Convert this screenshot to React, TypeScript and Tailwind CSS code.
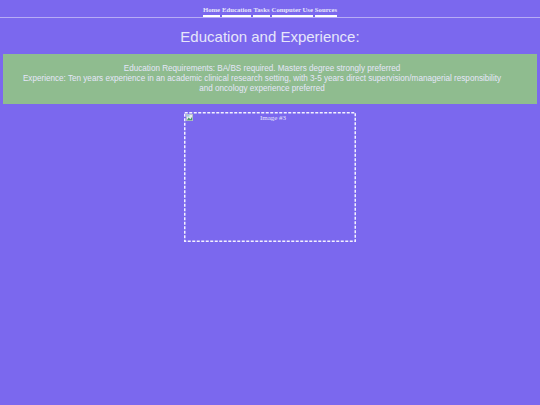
const links = ['Home', 'Education', 'Tasks', 'Computer Use', 'Sources'];

function BrokenImageIcon() {
  return (
    <svg width="7" height="7" viewBox="0 0 8 8" aria-hidden="true">
      <rect x="0.5" y="0.5" width="7" height="7" fill="#e8ecef" stroke="#b8c0c8" />
      <path d="M1 7 L3 4 L5 6 L7 3 L7 7 Z" fill="#4a9a6a" />
      <rect x="1" y="1" width="3" height="2" fill="#9cc8e8" />
    </svg>
  );
}

export default function App() {
  return (
    <div className="min-h-[405px] bg-[#7b68ee] text-[#e6e6fa] font-['Liberation_Sans',Arial,sans-serif]">
      <nav className="flex justify-center border-b border-[#b7acf5] pt-[5px] font-['Liberation_Serif','Times_New_Roman',serif] text-[6.7px] font-bold leading-[9px]">
        <div className="flex gap-[2px]">
          {links.map((link) => (
            <a key={link} href="#" className="border-b-2 border-white pb-[1px] text-[#e6e6fa]">
              {link}
            </a>
          ))}
        </div>
      </nav>

      <h1 className="mt-[9px] text-center text-[15px] leading-[20px]">Education and Experience:</h1>

      <section className="mx-[3px] mt-[7px] bg-[#8fbc8f] pl-[16px] pr-[32px] py-[10px] text-center text-[8.15px] leading-[10px]">
        <p>Education Requirements: BA/BS required. Masters degree strongly preferred</p>
        <p>
          Experience: Ten years experience in an academic clinical research setting, with 3-5 years direct
          supervision/managerial responsibility and oncology experience preferred
        </p>
      </section>

      <div className="mt-[8px] flex justify-center">
        <div className="relative h-[130px] w-[172px] p-[2px]">
          <svg className="absolute inset-0" width="172" height="130" aria-hidden="true">
            <rect
              x="0.75"
              y="0.75"
              width="170.5"
              height="128.5"
              fill="none"
              stroke="#f4f2ff"
              strokeWidth="1.5"
              strokeDasharray="3 1.5"
            />
          </svg>
          <div className="absolute left-[2px] top-[2px]">
            <BrokenImageIcon />
          </div>
          <p className="pl-[6px] text-center font-['Liberation_Serif','Times_New_Roman',serif] text-[7px] leading-[9px] text-[#e6e6fa]">
            Image #3
          </p>
        </div>
      </div>
    </div>
  );
}
